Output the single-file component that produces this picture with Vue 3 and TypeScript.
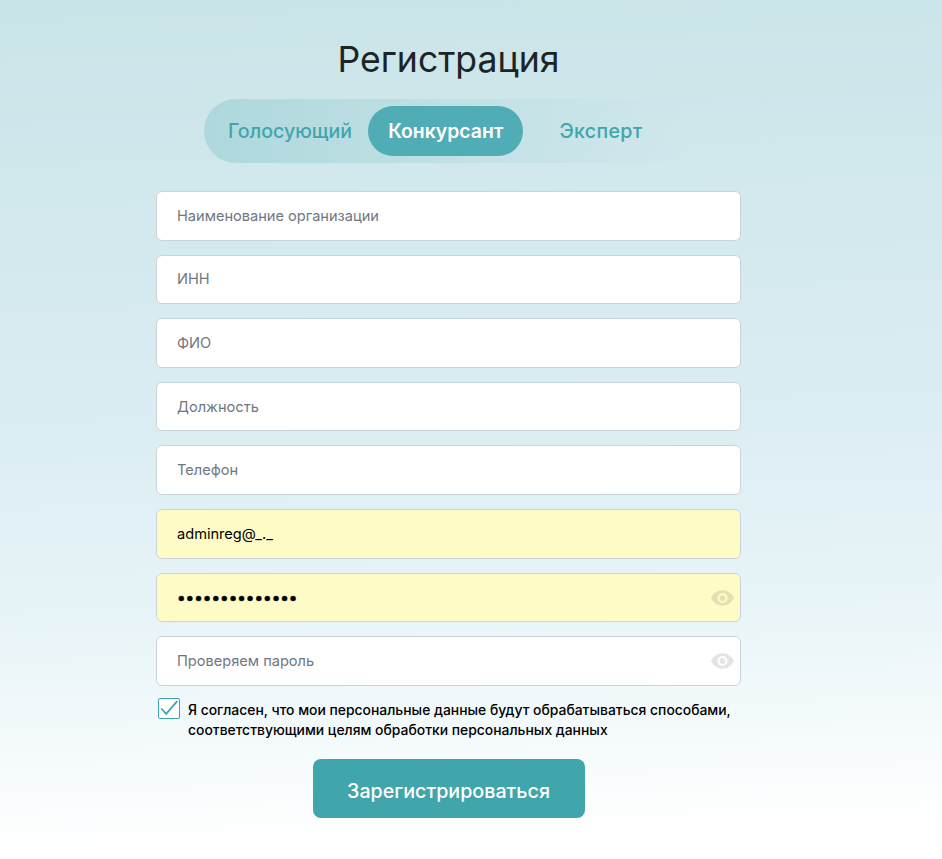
<script setup lang="ts">
const tabs = [
  { label: 'Голосующий', active: false },
  { label: 'Конкурсант', active: true },
  { label: 'Эксперт', active: false },
]
const fields = ['Наименование организации', 'ИНН', 'ФИО', 'Должность', 'Телефон']
</script>

<template>
  <main class="page">
    <h1 class="title">Регистрация</h1>
    <div class="tabs">
      <button v-for="t in tabs" :key="t.label" type="button" class="tab" :class="{ active: t.active }">{{ t.label }}</button>
    </div>
    <form class="form" @submit.prevent>
      <input v-for="f in fields" :key="f" class="field" type="text" :placeholder="f" />
      <input class="field filled" type="text" value="adminreg@_._" />
      <div class="pw">
        <input class="field filled dots" type="password" value="aaaaaaaaaaaaaa" />
        <svg class="eye" viewBox="0 0 24 16" width="23" height="16"><path fill-rule="evenodd" d="M12 0C6.500 0 2.200 3.400 0 8c2.200 4.600 6.500 8 12 8s9.800-3.400 12-8C21.800 3.400 17.500 0 12 0Zm0 2.700a5.300 5.300 0 1 1 0 10.600 5.300 5.300 0 0 1 0-10.600Zm0 2.300a3 3 0 1 0 0 6 3 3 0 0 0 0-6Z" /></svg>
      </div>
      <div class="pw">
        <input class="field" type="password" placeholder="Проверяем пароль" />
        <svg class="eye" viewBox="0 0 24 16" width="23" height="16"><path fill-rule="evenodd" d="M12 0C6.500 0 2.200 3.400 0 8c2.200 4.600 6.500 8 12 8s9.800-3.400 12-8C21.800 3.400 17.500 0 12 0Zm0 2.700a5.300 5.300 0 1 1 0 10.600 5.300 5.300 0 0 1 0-10.600Zm0 2.300a3 3 0 1 0 0 6 3 3 0 0 0 0-6Z" /></svg>
      </div>
      <label class="agree">
        <span class="box"><svg viewBox="0 0 22 21" width="22" height="21"><path d="M3.200 10.500 8.200 15.800 19.200 3.200" fill="none" stroke="#41a5ac" stroke-width="1.800" /></svg></span>
        <span class="agree-text">Я согласен, что мои персональные данные будут обрабатываться способами, соответствующими целям обработки персональных данных</span>
      </label>
      <button type="submit" class="submit">Зарегистрироваться</button>
    </form>
  </main>
</template>

<style scoped>
.page {
  box-sizing: border-box;
  height: 859px;
  padding: 38px 45px 0 0;
  display: flex;
  flex-direction: column;
  align-items: center;
  background: linear-gradient(178deg, #c9e4e8 0%, #dbedf2 48%, #e9f5f8 72%, #ffffff 96%);
  font-family: Inter, "Noto Sans", sans-serif;
}
.title {
  margin: 0;
  font-size: 35.6px;
  line-height: 44px;
  font-weight: 400;
  color: #1d2426;
}
.tabs {
  box-sizing: border-box;
  margin: 17px 3px 0 0;
  width: 486px;
  height: 64px;
  padding: 7px 0 7px 7px;
  display: flex;
  border-radius: 32px;
  background: linear-gradient(90deg, #aed8dd 0%, #c4e2e6 60%, rgba(206, 230, 234, 0) 100%);
}
.tab {
  height: 50px;
  padding: 0 20px;
  border: 0;
  border-radius: 25px;
  background: transparent;
  font: 500 19.600px/50px Inter, "Noto Sans", sans-serif;
  color: #41a5ac;
  white-space: nowrap;
}
.tab:first-child { padding: 0 16px 0 17px; }
.tab:last-child { padding: 0 36px; letter-spacing: 0.3px; }
.tab.active {
  padding: 0 20px;
  background: #50acb5;
  color: #fff;
  font-size: 19.4px;
  font-weight: 600;
}
.form {
  margin-top: 28px;
  width: 585px;
  display: flex;
  flex-direction: column;
  gap: 14px;
}
.field {
  display: block;
  box-sizing: border-box;
  width: 100%;
  height: 49.6px;
  padding: 0 20px;
  border: 1px solid #c9d4da;
  border-radius: 6px;
  background: #fff;
  font: 400 14.6px Inter, "Noto Sans", sans-serif;
  color: #000;
  outline: none;
}
.field::placeholder { color: #6f7782; opacity: 1; }
.filled { background: #fefbc7; }
.dots {
  font-size: 15.3px;
  -webkit-text-stroke: 0.7px #000;
}
.pw { position: relative; }
.eye {
  position: absolute;
  right: 7px;
  top: 17px;
  fill: #000;
  opacity: 0.1;
}
.agree {
  display: flex;
  gap: 8px;
  margin-top: -2px;
  padding-left: 2px;
}
.box {
  box-sizing: border-box;
  flex: none;
  width: 22px;
  height: 21px;
  border: 1px solid #41a5ac;
  border-radius: 2px;
  background: #fff;
  display: flex;
  align-items: center;
  justify-content: center;
  overflow: hidden;
}
.box svg { flex: none; }
.agree-text {
  font-size: 13.9px;
  line-height: 20px;
  font-weight: 500;
  color: #000;
  margin-top: 2px;
}
.submit {
  align-self: center;
  margin-top: 5px;
  width: 272px;
  height: 59px;
  padding: 5px 0 0;
  border: 0;
  border-radius: 8px;
  background: #41a5ac;
  color: #fff;
  font: 500 19.7px Inter, "Noto Sans", sans-serif;
}
</style>

<style>
html, body { margin: 0; }
</style>
